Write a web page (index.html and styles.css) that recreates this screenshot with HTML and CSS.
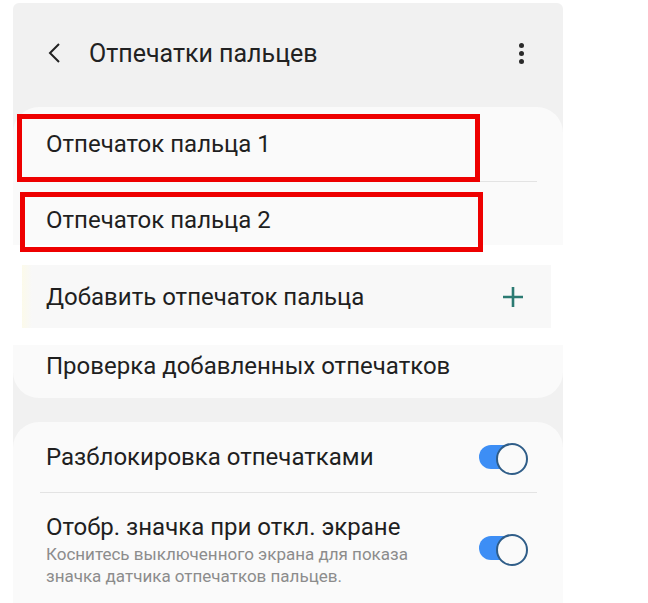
FILE: index.html
```html
<!DOCTYPE html>
<html lang="ru">
<head>
  <meta charset="UTF-8">
  <meta name="viewport" content="width=device-width, initial-scale=1.0">
  <title>Отпечатки пальцев</title>
  <link rel="stylesheet" href="styles.css">
</head>
<body>
  <div class="screen">
    <div class="appbar">
      <svg class="back" width="16" height="22" viewBox="0 0 16 22">
        <path d="M11 2 L2 11 L11 20" fill="none" stroke="#222" stroke-width="2"/>
      </svg>
      <h1>Отпечатки пальцев</h1>
      <div class="kebab"><span></span><span></span><span></span></div>
    </div>

    <div class="card">
      <div class="row row-first">
        Отпечаток пальца 1
        <span class="mark mark-1"></span>
      </div>
      <div class="divider"></div>
      <div class="row row-second">
        Отпечаток пальца 2
        <span class="mark mark-2"></span>
      </div>
      <div class="patch">
        <div class="patch-inner">
          <span>Добавить отпечаток пальца</span>
          <svg class="plus" width="20" height="20" viewBox="0 0 20 20">
            <path d="M10 0 V20 M0 10 H20" stroke="#2b7a72" stroke-width="2.6"/>
          </svg>
        </div>
      </div>
      <div class="row row-last">Проверка добавленных отпечатков</div>
    </div>

    <div class="card card-bottom">
      <div class="row row-switch">
        <span>Разблокировка отпечатками</span>
        <span class="toggle"></span>
      </div>
      <div class="divider"></div>
      <div class="row row-switch row-tall">
        <div class="text">
          <div class="title">Отобр. значка при откл. экране</div>
          <div class="sub">Коснитесь выключенного экрана для показа значка датчика отпечатков пальцев.</div>
        </div>
        <span class="toggle toggle-low"></span>
      </div>
    </div>
  </div>
</body>
</html>
```

FILE: styles.css
```css
* {
  box-sizing: border-box;
  margin: 0;
  padding: 0;
}

body {
  background-color: #fff;
  font-family: Roboto, 'Noto Sans', sans-serif;
  color: #1f1f1f;
  overflow: hidden;
}

.screen {
  margin: 3px 0 0 13px;
  width: 550px;
  min-height: 600px;
  background-color: #f1f1f1;
  border-radius: 6px 6px 0 0;
}

.appbar {
  height: 104px;
  display: flex;
  align-items: center;
  padding: 0 39px 4px 35px;
}

.back {
  margin-right: 25px;
}

h1 {
  flex: 1;
  font-size: 25px;
  font-weight: 400;
  color: #222;
}

.kebab {
  display: flex;
  flex-direction: column;
  gap: 3px;
}

.kebab span {
  width: 5px;
  height: 5px;
  border-radius: 50%;
  background-color: #2a2a2a;
}

.card {
  background-color: #fafafa;
  border-radius: 26px;
}

.card-bottom {
  margin-top: 24px;
  border-radius: 26px 26px 0 0;
}

.row {
  position: relative;
  display: flex;
  align-items: center;
  padding: 0 33px;
  font-size: 24px;
}

.row-first {
  height: 74px;
}

.row-second {
  height: 63px;
  padding-top: 12px;
}

.row-last {
  height: 53px;
  padding-bottom: 11px;
}

.divider {
  height: 1px;
  margin: 0 26px 0 27px;
  background-color: #e3e3e3;
}

.mark {
  position: absolute;
  z-index: 3;
  border: 5px solid #ee0000;
}

.mark-1 {
  left: 4px;
  top: 7px;
  width: 463px;
  height: 68px;
}

.mark-2 {
  left: 7px;
  top: 10px;
  width: 463px;
  height: 60px;
}

.patch {
  position: relative;
  z-index: 2;
  height: 100px;
  margin: 0 -10px 0 -13px;
  padding: 20px 22px 17px;
  background-color: #fff;
}

.patch-inner {
  height: 63px;
  display: flex;
  align-items: center;
  justify-content: space-between;
  padding: 0 28px 0 24px;
  font-size: 24px;
  background: linear-gradient(90deg, #fcfaea 0, #f8f8f8 10px);
}

.row-switch {
  justify-content: space-between;
  padding-right: 35px;
  height: 70px;
}

.row-tall {
  height: auto;
  padding-top: 20px;
  padding-bottom: 20px;
}

.title {
  font-size: 24px;
  line-height: 28px;
}

.sub {
  width: 400px;
  margin-top: 2px;
  font-size: 17px;
  line-height: 22px;
  color: #8c8c8c;
}

.toggle {
  position: relative;
  flex-shrink: 0;
  width: 49px;
  height: 28px;
}

.toggle-low {
  margin-bottom: 4px;
}

.toggle::before {
  content: '';
  position: absolute;
  left: 0;
  top: 2px;
  width: 40px;
  height: 24px;
  border-radius: 12px;
  background-color: #3d8ef5;
}

.toggle::after {
  content: '';
  position: absolute;
  right: 0;
  top: 0;
  width: 28px;
  height: 28px;
  border-radius: 50%;
  border: 2px solid #2f5d88;
  background-color: #fafafa;
}
```
